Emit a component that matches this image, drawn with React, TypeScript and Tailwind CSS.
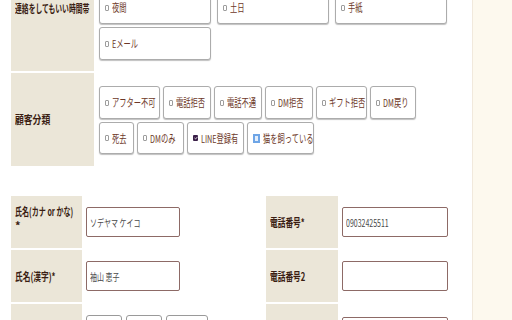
import React from 'react'

const FONT = { fontFamily: '"Noto Sans CJK JP", "Noto Sans", sans-serif' }

type Opt = { label: string; w: string; state?: 'on' | 'focus' }

const contactRows: Opt[][] = [
  [
    { label: '夜間', w: 'w-[112px]' },
    { label: '土日', w: 'w-[112px]' },
    { label: '手紙', w: 'w-[112px]' },
  ],
  [{ label: 'Eメール', w: 'w-[112px]' }],
]

const typeRows: Opt[][] = [
  [
    { label: 'アフター不可', w: 'w-[61px]' },
    { label: '電話拒否', w: 'w-[48px]' },
    { label: '電話不通', w: 'w-[48px]' },
    { label: 'DM拒否', w: 'w-[48px]' },
    { label: 'ギフト拒否', w: 'w-[51px]' },
    { label: 'DM戻り', w: 'w-[46px]' },
  ],
  [
    { label: '死去', w: 'w-[35px]' },
    { label: 'DMのみ', w: 'w-[47px]' },
    { label: 'LINE登録有', w: 'w-[57px]', state: 'on' },
    { label: '猫を飼っている', w: 'w-[67px]', state: 'focus' },
  ],
]

function Squeeze({ children, className = 'scale-x-[0.7]' }: { children: React.ReactNode; className?: string }) {
  return <span className={`inline-block origin-left whitespace-nowrap ${className}`}>{children}</span>
}

function Box({ state }: { state?: 'on' | 'focus' }) {
  if (state === 'on') {
    return (
      <span className="flex h-[6px] w-[5px] shrink-0 items-center justify-center rounded-[1px] bg-[#3a1f48]">
        <svg width="4" height="4" viewBox="0 0 4 4" aria-hidden="true">
          <path d="M0.5 2 L1.6 3 L3.5 0.8" stroke="#fff" strokeWidth="0.8" fill="none" />
        </svg>
      </span>
    )
  }
  if (state === 'focus') {
    return <span className="h-[9px] w-[7px] shrink-0 border-2 border-[#6ea5e6] bg-[#e4eefb]" />
  }
  return <span className="h-[6px] w-[4px] shrink-0 rounded-[1px] border border-[#9d9d9d]" />
}

function Option({ opt, h }: { opt: Opt; h: string }) {
  return (
    <label
      className={`flex ${opt.w} ${h} items-center gap-[3px] overflow-hidden rounded-[3px] border border-[#acacac] bg-white pl-[5px] shadow-[0_1px_1px_rgba(0,0,0,0.25)]`}
    >
      <Box state={opt.state} />
      <Squeeze className="scale-x-[0.66] text-[11px] text-[#6d3828]">{opt.label}</Squeeze>
    </label>
  )
}

function Label({ children, w, className = '' }: { children?: React.ReactNode; w: string; className?: string }) {
  return (
    <div className={`${w} shrink-0 bg-[#ebe6d8] pl-[4px] text-[11px] font-bold leading-[13px] text-[#3a1d12] ${className}`}>
      {children}
    </div>
  )
}

function Input({ value = '', w }: { value?: string; w: string }) {
  return (
    <div
      className={`flex h-[30px] ${w} items-center rounded-[2px] border border-[#8d6a66] bg-white pl-[3px] text-[10px] text-[#4a4a4a]`}
    >
      <Squeeze>{value}</Squeeze>
    </div>
  )
}

export default function App() {
  return (
    <div className="flex h-[320px] w-[512px] overflow-hidden bg-white" style={FONT}>
      <div className="flex-1 pl-[11px]">
        {/* contact time */}
        <div className="flex h-[71px] gap-[5px]">
          <Label w="w-[83px]" className="overflow-hidden pt-[2px]">
            <Squeeze className="scale-x-[0.62]">連絡をしてもいい時間帯</Squeeze>
          </Label>
          <div className="-mt-[9px] flex flex-col gap-[3px]">
            {contactRows.map((row, i) => (
              <div key={i} className="flex gap-[6px]">
                {row.map((o) => (
                  <Option key={o.label} opt={o} h="h-[33px]" />
                ))}
              </div>
            ))}
          </div>
        </div>

        {/* customer type */}
        <div className="mt-[2px] flex h-[93px] gap-[5px]">
          <Label w="w-[83px]" className="flex items-center">
            <Squeeze className="scale-x-[0.8]">顧客分類</Squeeze>
          </Label>
          <div className="mt-[13px] flex flex-col gap-[3px]">
            {typeRows.map((row, i) => (
              <div key={i} className="flex gap-[3px]">
                {row.map((o) => (
                  <Option key={o.label} opt={o} h={i === 0 ? 'h-[33px]' : 'h-[32px]'} />
                ))}
              </div>
            ))}
          </div>
        </div>

        {/* name / phone */}
        <div className="mt-[30px] grid grid-cols-[255px_1fr]">
          <div className="flex flex-col gap-[2px]">
            <div className="flex h-[52px] gap-[4px]">
              <Label w="w-[71px]" className="flex flex-col gap-[2px] overflow-hidden pt-[9px]">
                <span className="block h-[12px] w-[62px] origin-left scale-x-[0.64] whitespace-nowrap leading-[12px]">
                  氏名(カナ or かな)
                </span>
                <span className="block h-[12px] leading-[12px]">*</span>
              </Label>
              <div className="flex items-center">
                <Input value="ソデヤマ ケイコ" w="w-[94px]" />
              </div>
            </div>
            <div className="flex h-[52px] gap-[4px]">
              <Label w="w-[71px]" className="flex items-center">
                <Squeeze>氏名(漢字)*</Squeeze>
              </Label>
              <div className="flex items-center">
                <Input value="袖山 恵子" w="w-[94px]" />
              </div>
            </div>
            <div className="flex h-[52px] gap-[4px]">
              <Label w="w-[71px]" />
              <div className="flex gap-[4px] pt-[11px]">
                <div className="h-[30px] w-[36px] rounded-[3px] border border-[#9a9a9a]" />
                <div className="h-[30px] w-[36px] rounded-[3px] border border-[#9a9a9a]" />
                <div className="h-[30px] w-[42px] rounded-[3px] border border-[#9a9a9a]" />
              </div>
            </div>
          </div>
          <div className="flex flex-col gap-[2px]">
            <div className="flex h-[52px] gap-[4px]">
              <Label w="w-[72px]" className="flex items-center">
                <Squeeze>電話番号*</Squeeze>
              </Label>
              <div className="flex items-center">
                <Input value="09032425511" w="w-[106px]" />
              </div>
            </div>
            <div className="flex h-[52px] gap-[4px]">
              <Label w="w-[72px]" className="flex items-center">
                <Squeeze>電話番号2</Squeeze>
              </Label>
              <div className="flex items-center">
                <Input w="w-[106px]" />
              </div>
            </div>
            <div className="flex h-[52px] gap-[4px]">
              <Label w="w-[72px]" />
              <div className="pt-[13px]">
                <div className="h-[30px] w-[106px] rounded-[2px] border border-[#8d6a66]" />
              </div>
            </div>
          </div>
        </div>
      </div>
      <div className="w-[40px] shrink-0 border-l border-[#f1e9dc] bg-[#fdf9ee]" />
    </div>
  )
}
